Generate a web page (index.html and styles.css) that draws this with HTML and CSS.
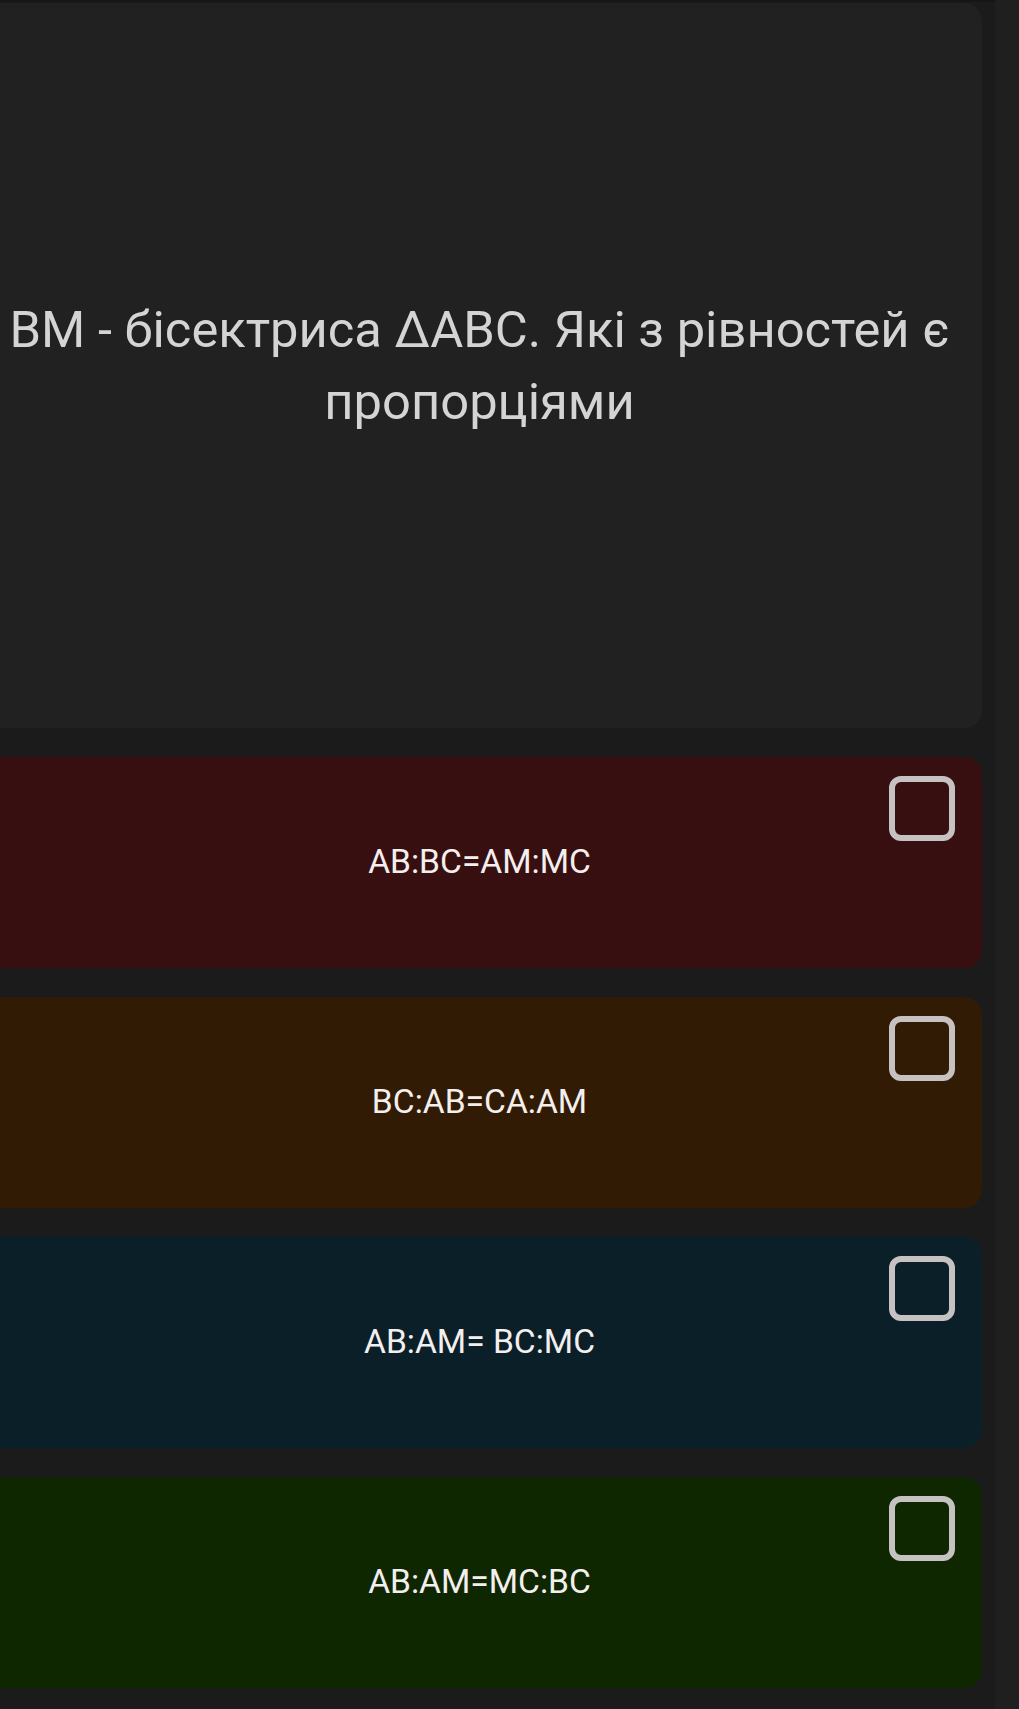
FILE: index.html
```html
<!DOCTYPE html>
<html lang="uk">
<head>
  <meta charset="UTF-8">
  <title>Тест</title>
  <link rel="stylesheet" href="styles.css">
</head>
<body>

<div class="page">
  <div class="question">
    <p>ВМ - бісектриса ΔАВС. Які з рівностей є пропорціями</p>
  </div>

  <div class="answer red">
    <span class="text">AB:BC=AM:MC</span>
    <span class="check"></span>
  </div>

  <div class="answer brown">
    <span class="text">BC:AB=CA:AM</span>
    <span class="check"></span>
  </div>

  <div class="answer blue">
    <span class="text">AB:AM= BC:MC</span>
    <span class="check"></span>
  </div>

  <div class="answer green">
    <span class="text">AB:AM=MC:BC</span>
    <span class="check"></span>
  </div>
</div>

<div class="scrollbar"></div>

</body>
</html>
```

FILE: styles.css
```css
html, body {
  margin: 0;
  padding: 0;
  height: 100%;
}
body {
  background-color: #1b1b1b;
  font-family: Roboto, "Noto Sans", sans-serif;
  overflow: hidden;
  border-top: 2px solid #161616;
  box-sizing: border-box;
}
.page {
  width: 1005px;
  margin-left: -23px;
  padding-top: 1px;
}
.question {
  background-color: #212121;
  border-radius: 18px;
  height: 725px;
  display: flex;
  align-items: center;
  justify-content: center;
  margin-bottom: 29px;
}
.question p {
  margin: 0;
  padding: 0 10px;
  text-align: center;
  color: #d4d4d4;
  font-size: 50.7px;
  line-height: 72px;
}
.answer {
  position: relative;
  height: 211px;
  border-radius: 18px;
  margin-bottom: 29px;
  display: flex;
  align-items: center;
  justify-content: center;
}
.answer .text {
  color: #f4efef;
  font-size: 33.6px;
  margin-top: -3px;
}
.answer .check {
  position: absolute;
  top: 19px;
  right: 27px;
  width: 54px;
  height: 53px;
  border: 6px solid #c7c2c2;
  border-radius: 12px;
}
.red {
  background-color: #380f11;
}
.brown {
  background-color: #321b04;
}
.blue {
  background-color: #0b1f29;
}
.green {
  background-color: #0f2701;
}
.scrollbar {
  position: fixed;
  top: 0;
  right: 0;
  width: 24px;
  height: 100%;
  background-color: #1f1f1f;
}
```
